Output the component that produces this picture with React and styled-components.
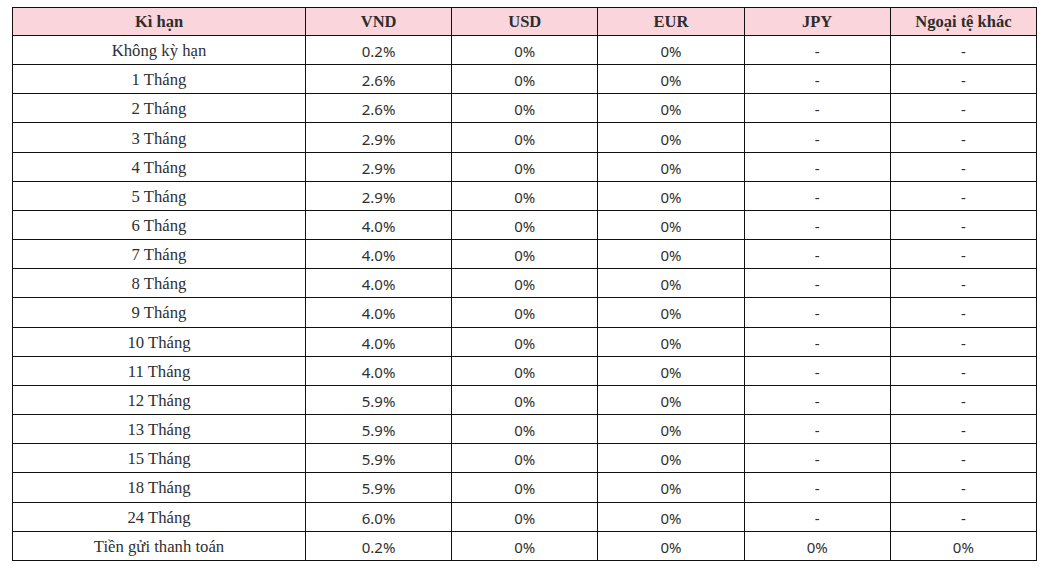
import React from "react";
import styled, { createGlobalStyle } from "styled-components";

const GlobalStyle = createGlobalStyle`
  html, body {
    margin: 0;
    padding: 0;
    background: #fff;
  }
`;

const columns = ["Kì hạn", "VND", "USD", "EUR", "JPY", "Ngoại tệ khác"];

const rows = [
  ["Không kỳ hạn", "0.2%", "0%", "0%", "-", "-"],
  ["1 Tháng", "2.6%", "0%", "0%", "-", "-"],
  ["2 Tháng", "2.6%", "0%", "0%", "-", "-"],
  ["3 Tháng", "2.9%", "0%", "0%", "-", "-"],
  ["4 Tháng", "2.9%", "0%", "0%", "-", "-"],
  ["5 Tháng", "2.9%", "0%", "0%", "-", "-"],
  ["6 Tháng", "4.0%", "0%", "0%", "-", "-"],
  ["7 Tháng", "4.0%", "0%", "0%", "-", "-"],
  ["8 Tháng", "4.0%", "0%", "0%", "-", "-"],
  ["9 Tháng", "4.0%", "0%", "0%", "-", "-"],
  ["10 Tháng", "4.0%", "0%", "0%", "-", "-"],
  ["11 Tháng", "4.0%", "0%", "0%", "-", "-"],
  ["12 Tháng", "5.9%", "0%", "0%", "-", "-"],
  ["13 Tháng", "5.9%", "0%", "0%", "-", "-"],
  ["15 Tháng", "5.9%", "0%", "0%", "-", "-"],
  ["18 Tháng", "5.9%", "0%", "0%", "-", "-"],
  ["24 Tháng", "6.0%", "0%", "0%", "-", "-"],
  ["Tiền gửi thanh toán", "0.2%", "0%", "0%", "0%", "0%"],
];

const App = () => {
  return (
    <Page>
      <GlobalStyle />
      <RateTable>
        <colgroup>
          <col style={{ width: 293 }} />
          {columns.slice(1).map((c) => (
            <col key={c} />
          ))}
        </colgroup>
        <thead>
          <tr>
            {columns.map((c) => (
              <HeadCell key={c}>{c}</HeadCell>
            ))}
          </tr>
        </thead>
        <tbody>
          {rows.map((row) => (
            <tr key={row[0]}>
              {row.map((value, i) => (
                <Cell key={i} $term={i === 0}>
                  {value}
                </Cell>
              ))}
            </tr>
          ))}
        </tbody>
      </RateTable>
    </Page>
  );
};

export default App;

const Page = styled.div`
  padding: 7px 10px 0 12px;
`;

const RateTable = styled.table`
  width: 1025px;
  border-collapse: collapse;
  table-layout: fixed;
  color: #2b2b2b;
`;

const HeadCell = styled.th`
  height: 26px;
  padding: 1px 0 0;
  background: #fbd5dc;
  border: 1px solid #111;
  font-family: "Liberation Serif", serif;
  font-weight: 700;
  font-size: 16.5px;
  text-align: center;
  color: #2d2d2d;
`;

const Cell = styled.td`
  height: 26.17px;
  padding: 2px 0 0;
  border: 1px solid #111;
  text-align: center;
  font-family: ${(p) =>
    p.$term ? `"Liberation Serif", serif` : `"Noto Sans", sans-serif`};
  font-size: ${(p) => (p.$term ? "16.7px" : "15px")};
  color: #2f2f2f;
`;
